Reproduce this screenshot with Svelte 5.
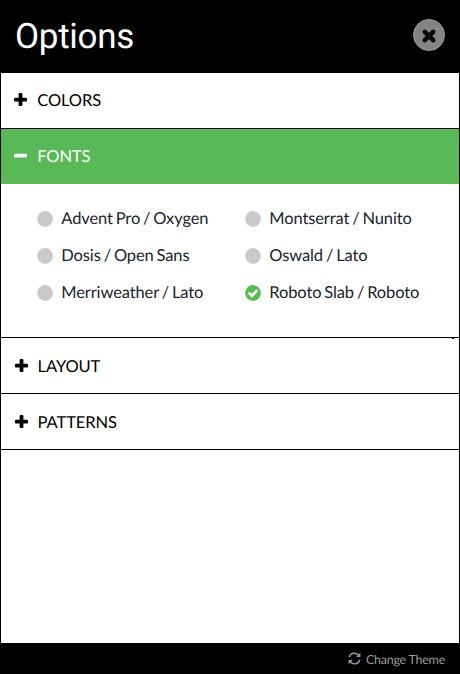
<script>
  let open = $state('FONTS');
  let selected = $state('Roboto Slab / Roboto');
  const sections = ['COLORS', 'FONTS', 'LAYOUT', 'PATTERNS'];
  const fonts = [
    'Advent Pro / Oxygen', 'Montserrat / Nunito',
    'Dosis / Open Sans', 'Oswald / Lato',
    'Merriweather / Lato', 'Roboto Slab / Roboto'
  ];
</script>

<div class="panel">
  <header>
    <h1>Options</h1>
    <button class="close" aria-label="Close">
      <svg width="32" height="32" viewBox="0 0 32 32">
        <circle cx="16" cy="16" r="15.5" fill="#848484" stroke="#999" />
        <path d="M11.8 12.9 20.2 21.1M20.2 12.9 11.8 21.1" stroke="#090909" stroke-width="4.7" stroke-linecap="round" />
      </svg>
    </button>
  </header>

  <main>
    {#each sections as name, i}
      <section>
        <button class="bar" class:raised={i < 2} class:active={open === name} onclick={() => (open = name)}>
          <svg width="13" height="13" viewBox="0 0 13 13" fill="currentColor">
            <rect x="0" y="4.7" width="13" height="3.8" rx="0.9" />
            {#if open !== name}
              <rect x="4.6" y="0" width="3.8" height="13" rx="0.9" />
            {/if}
          </svg>
          <span>{name}</span>
        </button>
        {#if name === 'FONTS' && open === name}
          <div class="choices">
            {#each fonts as font}
              <button class="choice" onclick={() => (selected = font)}>
                <svg width="16" height="16" viewBox="0 0 16 16">
                  <circle cx="8" cy="8" r="7.9" fill={selected === font ? '#5ab957' : '#cacaca'} />
                  {#if selected === font}
                    <path d="M3.7 7.6 6.9 10.8 12.4 5.3" fill="none" stroke="#fff" stroke-width="2.7" />
                  {/if}
                </svg>
                <span>{font}</span>
              </button>
            {/each}
            <i class="tick"></i>
          </div>
        {/if}
      </section>
    {/each}
  </main>

  <footer>
    <svg width="13" height="13" viewBox="0 0 13 13" fill="none" stroke="currentColor" stroke-width="1.5">
      <path d="M1.3 5.2A5.2 5.2 0 0 1 10.6 3.4M11.7 7.8A5.2 5.2 0 0 1 2.4 9.6" />
      <path d="M12.4.8V5.1H8.1ZM.6 12.2V7.9H4.9Z" fill="currentColor" stroke="none" />
    </svg>
    <span>Change Theme</span>
  </footer>
</div>

<style>
  :global(body) { margin: 0; background: #fff; }
  .panel {
    box-sizing: border-box;
    width: 460px;
    height: 674px;
    display: flex;
    flex-direction: column;
    border: solid #000;
    border-width: 0 1px;
    background: #fff;
    font-family: Lato, sans-serif;
    text-rendering: geometricPrecision;
  }
  button {
    border: 0;
    padding: 0;
    margin: 0;
    background: none;
    font: inherit;
    text-align: left;
    text-rendering: inherit;
    cursor: pointer;
  }
  svg { display: block; flex: none; }
  header {
    height: 73px;
    box-sizing: border-box;
    padding: 0 14px;
    background: #000;
    display: flex;
    align-items: center;
    justify-content: space-between;
  }
  h1 {
    margin: 0;
    color: #fff;
    font: 400 35px/73px Roboto, sans-serif;
    letter-spacing: -0.3px;
  }
  .close { margin-top: -3px; }
  main { flex: 1; }
  section { border-bottom: 1px solid #000; }
  .bar {
    box-sizing: border-box;
    width: 100%;
    height: 55px;
    padding-left: 13.6px;
    display: flex;
    align-items: center;
    gap: 10px;
    color: #000;
    font-size: 16.5px;
    line-height: 20px;
    letter-spacing: -0.1px;
  }
  .raised { padding-left: 13.2px; padding-bottom: 1.4px; }
  .active { background: #5ab957; color: #fff; }
  .choices {
    position: relative;
    height: 153px;
    box-sizing: border-box;
    padding: 16px 0 0 36px;
    display: grid;
    grid-template-columns: 208px 1fr;
    grid-auto-rows: 37px;
  }
  .choice {
    display: flex;
    align-items: center;
    gap: 8.3px;
    color: #20232a;
    font-size: 16.5px;
    letter-spacing: -0.12px;
    word-spacing: -1.2px;
    line-height: 20px;
    white-space: nowrap;
  }
  .choice span { margin-top: -1px; }
  .tick {
    position: absolute;
    right: 5px;
    bottom: -2px;
    width: 2px;
    height: 1px;
    background: #000;
  }
  footer {
    height: 31px;
    padding-right: 14px;
    background: #000;
    color: #999;
    display: flex;
    align-items: center;
    justify-content: flex-end;
    gap: 5px;
    font-size: 12.5px;
    line-height: 16px;
    letter-spacing: -0.25px;
  }
  footer span { padding-top: 2px; }
</style>
